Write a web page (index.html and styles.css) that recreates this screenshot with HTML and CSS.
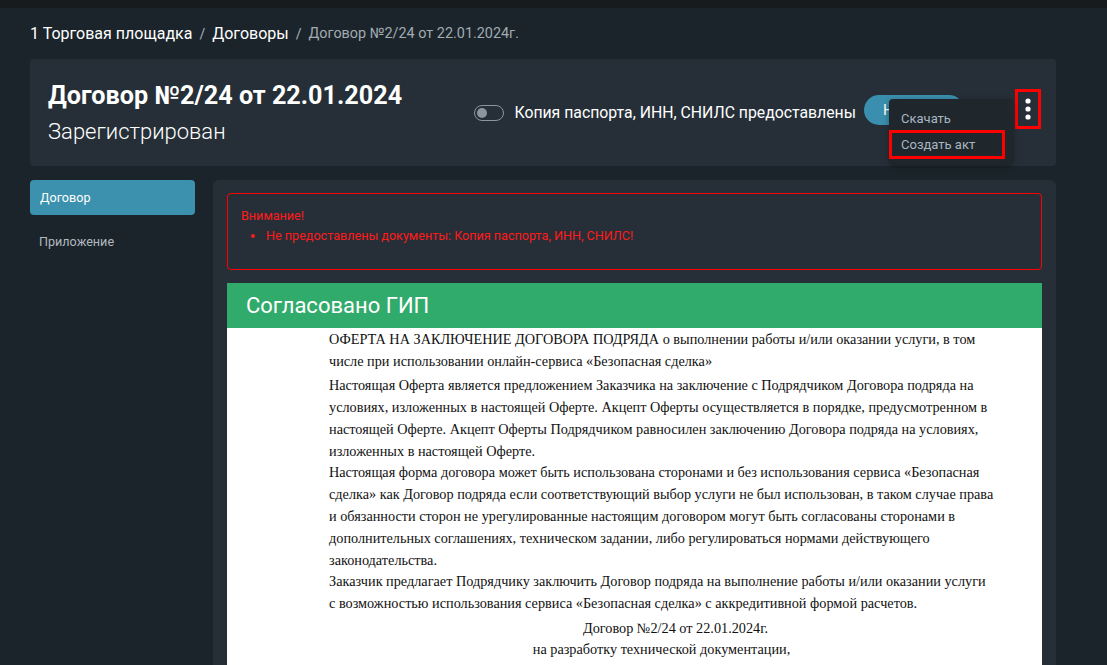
FILE: index.html
```html
<!DOCTYPE html>
<html lang="ru">
<head>
<meta charset="utf-8">
<title>Договор №2/24</title>
<link rel="stylesheet" href="styles.css">
</head>
<body>
<div class="topbar"></div>
<div class="page">
  <nav class="crumbs">
    <a class="crumb">1 Торговая площадка</a>
    <span class="sep">/</span>
    <a class="crumb">Договоры</a>
    <span class="sep">/</span>
    <span class="crumb-current">Договор №2/24 от 22.01.2024г.</span>
  </nav>

  <header class="head-card">
    <div class="head-titles">
      <h1 class="title">Договор №2/24 от 22.01.2024</h1>
      <div class="status">Зарегистрирован</div>
    </div>
    <div class="head-actions">
      <label class="switch-row">
        <span class="switch"><span class="knob"></span></span>
        <span class="switch-label">Копия паспорта, ИНН, СНИЛС предоставлены</span>
      </label>
      <div class="btn-wrap">
        <button class="btn-pill">Н</button>
        <div class="menu">
          <div class="menu-item">Скачать</div>
          <div class="menu-item menu-item-marked">Создать акт</div>
        </div>
      </div>
      <button class="kebab" aria-label="Ещё">
        <svg width="6" height="22" viewBox="0 0 6 22"><circle cx="3" cy="3" r="2.6" fill="#fff"/><circle cx="3" cy="11" r="2.6" fill="#fff"/><circle cx="3" cy="19" r="2.6" fill="#fff"/></svg>
      </button>
    </div>
  </header>

  <div class="layout">
    <aside class="side">
      <div class="side-item active">Договор</div>
      <div class="side-item">Приложение</div>
    </aside>
    <main class="main-card">
      <div class="alert">
        <div class="alert-title">Внимание!</div>
        <ul class="alert-list">
          <li>Не предоставлены документы: Копия паспорта, ИНН, СНИЛС!</li>
        </ul>
      </div>
      <div class="approved">Согласовано ГИП</div>
      <div class="doc">
        <div class="doc-body">
          <p>ОФЕРТА НА ЗАКЛЮЧЕНИЕ ДОГОВОРА ПОДРЯДА о выполнении работы и/или оказании услуги, в том числе при использовании онлайн-сервиса «Безопасная сделка»</p>
          <p>Настоящая Оферта является предложением Заказчика на заключение с Подрядчиком Договора подряда на условиях, изложенных в настоящей Оферте. Акцепт Оферты осуществляется в порядке, предусмотренном в настоящей Оферте. Акцепт Оферты Подрядчиком равносилен заключению Договора подряда на условиях, изложенных в настоящей Оферте.<br>Настоящая форма договора может быть использована сторонами и без использования сервиса «Безопасная сделка» как Договор подряда если соответствующий выбор услуги не был использован, в таком случае права и обязанности сторон не урегулированные настоящим договором могут быть согласованы сторонами в дополнительных соглашениях, техническом задании, либо регулироваться нормами действующего законодательства.<br>Заказчик предлагает Подрядчику заключить Договор подряда на выполнение работы и/или оказании услуги с возможностью использования сервиса «Безопасная сделка» с аккредитивной формой расчетов.</p>
          <p class="center"><span class="doc-num">Договор №2/24 от 22.01.2024г.</span><br>на разработку технической документации,</p>
        </div>
      </div>
    </main>
  </div>
</div>
</body>
</html>
```
FILE: styles.css
```css
* { box-sizing: border-box; }
html, body { margin: 0; padding: 0; }
body {
  background: #1b242a;
  font-family: Roboto, "Noto Sans", "Liberation Sans", sans-serif;
  color: #fff;
  height: 665px;
  overflow: hidden;
}
.topbar {
  height: 8px;
  background: #171b1e;
}
.page {
  padding: 0 51px 0 30px;
}
.crumbs {
  height: 51px;
  display: flex;
  align-items: center;
  gap: 7px;
  font-size: 16px;
}
.crumb { color: #fff; }
.sep { color: #aab2b8; font-size: 14px; }
.crumb-current { color: #a2abb2; font-size: 14.4px; }

.head-card {
  background: #262f38;
  border-radius: 4px;
  height: 107px;
  display: flex;
  justify-content: space-between;
  align-items: flex-start;
  padding: 0 0 0 18px;
}
.head-titles { padding-top: 21px; }
.title {
  margin: 0;
  font-size: 25.2px;
  font-weight: 700;
  line-height: 32px;
}
.status {
  font-size: 22px;
  font-weight: 300;
  line-height: 28px;
  margin-top: 6px;
}
.head-actions {
  display: flex;
  align-items: flex-start;
  padding-top: 31px;
  padding-right: 15px;
}
.switch-row {
  display: flex;
  align-items: center;
  gap: 10px;
  margin-top: 13px;
  margin-left: 2px;
}
.switch {
  width: 30px;
  height: 16px;
  border: 1px solid #8d959c;
  border-radius: 8px;
  display: flex;
  align-items: center;
  padding-left: 2px;
}
.knob {
  width: 10px;
  height: 10px;
  border-radius: 50%;
  background: #8d959c;
}
.switch-label {
  font-size: 15.8px;
  color: #fff;
}
.btn-wrap {
  position: relative;
  margin-left: 8px;
  margin-top: 5px;
}
.btn-pill {
  width: 100px;
  height: 30px;
  border: none;
  border-radius: 15px;
  background: #3a8fae;
  color: #fff;
  font-family: inherit;
  font-size: 15px;
  text-align: left;
  padding-left: 19px;
}
.menu {
  position: absolute;
  left: 25px;
  top: 4px;
  width: 124px;
  background: #1f272d;
  border-radius: 4px;
  box-shadow: 0 2px 6px rgba(0,0,0,0.35);
  padding: 7px 0 5px;
  z-index: 5;
}
.menu-item {
  font-size: 13px;
  color: #a9b7c2;
  padding: 5px 12px 4px 12px;
  line-height: 15px;
}
.menu-item-marked {
  margin-top: 0;
  width: 116px;
  border: 3px solid #ff0000;
  padding: 4px 9px 4px;
  line-height: 15px;
}
.kebab {
  margin-left: 51px;
  margin-top: -1px;
  width: 26px;
  height: 40px;
  border: 3px solid #ff0000;
  background: transparent;
  display: flex;
  align-items: center;
  justify-content: center;
  padding: 0;
}

.layout {
  display: flex;
  gap: 18px;
  margin-top: 14px;
}
.side {
  width: 165px;
  flex: none;
}
.side-item {
  font-size: 12.6px;
  color: #b1b9bf;
  height: 35px;
  display: flex;
  align-items: center;
  padding-left: 9px;
  border-radius: 4px;
}
.side-item.active {
  background: #3b91ae;
  color: #fff;
  padding-left: 10px;
}
.side-item + .side-item { margin-top: 9px; }

.main-card {
  flex: 1;
  background: #262f38;
  border-radius: 6px 6px 0 0;
  padding: 13px 14px 0;
  height: 500px;
}
.alert {
  border: 1px solid #ff0000;
  border-radius: 4px;
  height: 77px;
  padding: 13px 13px;
  color: #ff1a1a;
  font-size: 12.6px;
}
.alert-title { line-height: 17px; }
.alert-list {
  margin: 3px 0 0;
  padding-left: 25px;
  line-height: 17px;
}
.approved {
  margin-top: 13px;
  height: 45px;
  background: #31ab6b;
  color: #fff;
  font-size: 22px;
  display: flex;
  align-items: center;
  padding-left: 19px;
}
.doc {
  background: #fff;
  height: 400px;
  padding: 1px 0 0 102px;
}
.doc-body {
  width: 665px;
  font-family: "Liberation Serif", "Times New Roman", serif;
  font-size: 14.26px;
  line-height: 21.8px;
  color: #111;
}
.doc-body p { margin: 0 0 2.6px; }
.doc-body .center { text-align: center; }
.doc-num { padding-left: 28px; }
```
